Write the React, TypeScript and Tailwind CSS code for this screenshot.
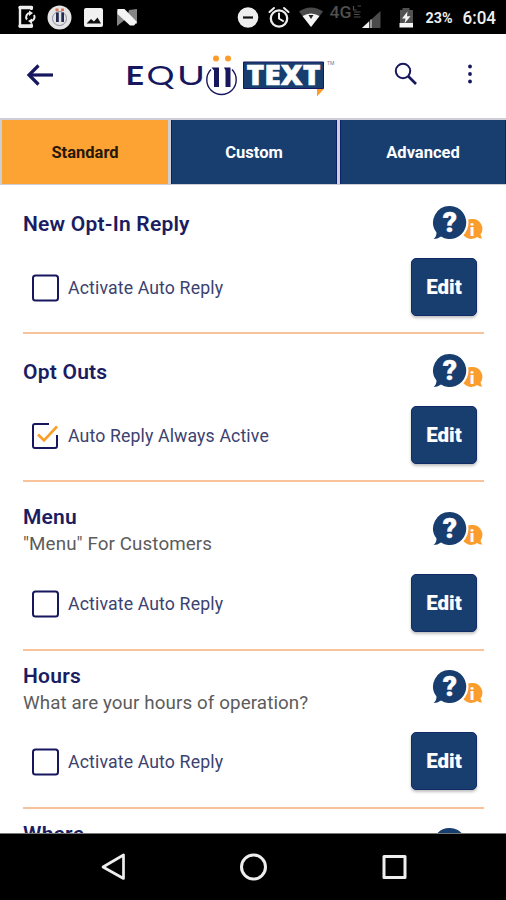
import React from "react";

const NAVY = "#183e70";
const INK = "#17175f";
const ORANGE = "#fb9d2c";

function StatusBar() {
  return (
    <div className="h-[34px] shrink-0 bg-black">
      <svg width="506" height="34" viewBox="0 0 506 34" fontFamily="Roboto, sans-serif">
        <g fill="none" stroke="#ededed">
          <path d="M31.5 10V7.5H20V26.5H31.5V23.5" strokeWidth="2.4" strokeLinejoin="round" />
          <path d="M20 26H31.5M20 7.5H31.5" strokeWidth="3.4" strokeLinecap="round" />
          <path d="M27 19.500a4 4 0 0 1 3-6.500M34 15a4 4 0 0 1-3 6" strokeWidth="2" />
        </g>
        <path d="M29 10.500l4 2.500-4 3zM32 18.500l-4 2.500 4 3z" fill="#ededed" />
        <circle cx="59.500" cy="17.500" r="12" fill="#e4e4e4" />
        <circle cx="59.500" cy="18.500" r="7" fill="none" stroke="#8c8da0" strokeWidth="1" />
        <path d="M56 12.500h2.800v9.500H56zM61.300 12.500H64v9.500h-2.700z" fill="#252b50" />
        <path d="M55.500 8.500h3v2.500h-3zM61 8.500h3v2.500h-3z" fill="#e2734b" />
        <rect x="84" y="8" width="19" height="19" rx="2" fill="#f1f1f1" />
        <path d="M86.500 23.500l4.500-4.500 3 2.500 3.500-4 3.500 6z" fill="#111" />
        <path d="M117 10l9 6v3l-9 7zM137 9v15l-10-6 2-8z" fill="#858585" />
        <path d="M117.500 9h7L137 22l-3 3.500h-4L117.500 14z" fill="#f4f4f4" />
        <circle cx="248" cy="17.500" r="10.300" fill="#eee" />
        <path d="M243 17.500h10" stroke="#111" strokeWidth="2.200" />
        <g fill="none" stroke="#eee" strokeWidth="2">
          <circle cx="279" cy="18.500" r="8.200" strokeWidth="2.300" />
          <path d="M279 13.500v5l4 2.500M269.500 12l4.500-4M288.500 12l-4.500-4" strokeLinecap="round" />
        </g>
        <path d="M299 11.500Q311 3.500 323 11.500L311 27z" fill="#4a4a4a" />
        <path d="M302.500 16Q311 11 319.500 16L311 27z" fill="#f5f5f5" />
        <path d="M308.500 15h5l-2.500 4z" fill="#222" />
        <text x="329.500" y="17.500" fontSize="16" fontWeight="500" fill="#4f4f4f" textLength="22" lengthAdjust="spacingAndGlyphs">4G</text>
        <path d="M353.500 6v4h3M357.500 6h3.500M354 12h6.500M354 14.500h5.500M354 17h6.500" stroke="#4f4f4f" strokeWidth="1.200" fill="none" />
        <path d="M362 28L380.500 11V28z" fill="#4b4b4b" />
        <path d="M362 28l7-6.500V28z" fill="#f2f2f2" />
        <path d="M371 19.500V28" stroke="#b8b8b8" strokeWidth="1.500" />
        <path d="M402.500 8h7v2h3.500v13h-13V10h2.500z" fill="#515151" />
        <path d="M399.500 23h13.500v4.500h-13.500z" fill="#f5f5f5" />
        <path d="M407.500 11.500l-5.500 7h3.500l-1 5 6-7.200H407z" fill="#f5f5f5" />
        <text x="425.500" y="23" fontSize="14" fontWeight="700" fill="#eee" textLength="27" lengthAdjust="spacingAndGlyphs">23%</text>
        <text x="462.500" y="24" fontSize="18" fontWeight="500" fill="#eee" textLength="33.500" lengthAdjust="spacingAndGlyphs">6:04</text>
      </svg>
    </div>
  );
}

function Logo() {
  return (
    <svg className="ml-[72px]" width="212" height="46" viewBox="126 53 212 46">
      <g fill={INK} fontFamily="Lato, sans-serif" fontSize="27.500">
        <text x="125.500" y="84.500" fontWeight="700" textLength="18.500" lengthAdjust="spacingAndGlyphs">E</text>
        <text x="146.500" y="84.500" textLength="28" lengthAdjust="spacingAndGlyphs">Q</text>
        <text x="177" y="84.500" textLength="28" lengthAdjust="spacingAndGlyphs">U</text>
      </g>
      <path d="M211 69.500A14.700 14.700 0 1 0 232 69.500" fill="none" stroke={INK} strokeWidth="1.400" />
      <path d="M211.500 67.500h7.500V87h-5V70.500zM224 67.500h6.500V87h-5V70.500z" fill={INK} />
      <circle cx="216" cy="58.500" r="3" fill={ORANGE} />
      <circle cx="228" cy="58.500" r="3" fill={ORANGE} />
      <path d="M243.500 62h80v26.500h-80z" fill={NAVY} stroke={INK} strokeWidth="1" />
      <text x="246.500" y="85" fontFamily="Open Sans, sans-serif" fontWeight="800" fontSize="28" fill="#fff" stroke="#fff" strokeWidth="0.500" textLength="74" lengthAdjust="spacingAndGlyphs">TEXT</text>
      <path d="M317 89h7l-7 7.500z" fill={ORANGE} />
      <text x="327" y="65" fontFamily="Roboto, sans-serif" fontSize="5" fill="#77778c">TM</text>
    </svg>
  );
}

function Header() {
  return (
    <header className="flex h-[84px] shrink-0 items-center bg-white">
      <svg className="ml-[26px] mt-[-2px] shrink-0" width="28" height="24" viewBox="0 0 28 24" fill="none" stroke={INK} strokeWidth="3.200">
        <path d="M27 12H3" />
        <path d="M12.500 2.500L3 12l9.500 9.500" />
      </svg>
      <Logo />
      <svg className="ml-[55px] mt-[-6px] shrink-0" width="25" height="25" viewBox="0 0 25 25" fill="none" stroke={INK}>
        <circle cx="10" cy="10" r="7.200" strokeWidth="2" />
        <path d="M15 15l8 8" strokeWidth="2.700" />
      </svg>
      <svg className="ml-[49px] mt-[-5px] shrink-0" width="6" height="22" viewBox="0 0 6 22" fill={INK}>
        <circle cx="3" cy="3.500" r="1.900" />
        <circle cx="3" cy="11" r="1.900" />
        <circle cx="3" cy="18.500" r="1.900" />
      </svg>
    </header>
  );
}

function Tabs() {
  return (
    <nav className="grid h-[67px] shrink-0 grid-cols-[166px_166px_166px] gap-[3px] bg-[#cdced6] pt-[2px] pr-[0px] pb-[1px] pl-[2px] text-[16.500px] font-bold text-white">
      <button className="bg-[#fda333] pt-[2px] text-[#27180a]">Standard</button>
      <button className="border-x border-[#0b2167] bg-[#183e70] pt-[2px]">Custom</button>
      <button className="border-x border-[#0b2167] bg-[#183e70] pt-[2px]">Advanced</button>
    </nav>
  );
}

function HelpIcon() {
  return (
    <svg width="51" height="36" viewBox="0 0 51 36" fontFamily="Roboto, sans-serif" fontWeight="900" fill="#fff" textAnchor="middle">
      <path d="M40.500 14a9.800 9.800 0 0 1 8 15.500q.5 2.800 2 4-3.500 0-5.500-1.500a10 10 0 1 1-4.500-18z" fill={ORANGE} />
      <circle cx="18" cy="17.500" r="18.500" />
      <path d="M18 1a16.500 16.500 0 1 1-9 30.500Q5.500 34 1.500 34q3-2.500 3-6.500A16.500 16.500 0 0 1 18 1z" fill={NAVY} />
      <text x="18" y="27" fontSize="28" stroke="#fff" strokeWidth="0.400">?</text>
      <text x="40" y="30.500" fontSize="17">i</text>
    </svg>
  );
}

function Checkbox({ checked }: { checked?: boolean }) {
  return (
    <svg width="30" height="28" viewBox="0 0 30 28" fill="none" stroke={INK} strokeWidth="2">
      {checked ? (
        <>
          <path d="M18 2H4Q2 2 2 4V24Q2 26 4 26H24Q26 26 26 24V13" />
          <path d="M7 12.500l6 6L26 4.500" stroke={ORANGE} strokeWidth="2.600" />
        </>
      ) : (
        <rect x="2" y="1.500" width="25" height="25" rx="2.500" />
      )}
    </svg>
  );
}

type SectionProps = {
  title: string;
  subtitle?: string;
  label?: string;
  checked?: boolean;
  size: string;
  titlePad: string;
  iconPad: string;
  rowPad?: string;
};

function Section({ title, subtitle, label, checked, size, titlePad, iconPad, rowPad = "mb-[16px]" }: SectionProps) {
  return (
    <section className={`mx-[23px] flex w-[461px] shrink-0 flex-col justify-between border-b-2 border-[#f8c29a] ${size}`}>
      <div className="flex items-start justify-between">
        <div className={titlePad}>
          <h2 className="text-[21px] leading-[26px] font-semibold tracking-[0.220px] text-[#1b1d62]">{title}</h2>
          {subtitle && <p className="text-[18.800px] leading-[28px] tracking-[0.100px] text-[#5c5c5c]">{subtitle}</p>}
        </div>
        <div className={`mr-[1px] ${iconPad}`}>
          <HelpIcon />
        </div>
      </div>
      {label && (
        <div className={`flex h-[58px] shrink-0 items-center ${rowPad}`}>
          <label className="ml-[8px] flex items-center gap-[7px] pt-[2px] text-[17.700px] tracking-[0.130px] text-[#3b4270]">
            <Checkbox checked={checked} />
            {label}
          </label>
          <button className="mr-[7px] ml-auto h-[58px] w-[66px] rounded-[5px] border border-[#122b68] bg-[#183e70] text-[20.500px] font-black text-white shadow-[0_2px_3px_rgba(0,0,0,0.25)]">
            Edit
          </button>
        </div>
      )}
    </section>
  );
}

function NavBar() {
  return (
    <footer className="h-[67px] shrink-0 border-t border-[#777] bg-black">
      <svg width="506" height="66" viewBox="0 834 506 66" fill="none" stroke="#eee" strokeWidth="3" strokeLinejoin="round">
        <path d="M103 867L123.500 855V878.500z" strokeWidth="2.700" />
        <circle cx="253.500" cy="867" r="12" />
        <rect x="384" y="856.500" width="21" height="21" />
      </svg>
    </footer>
  );
}

export default function App() {
  return (
    <div className="flex h-[900px] w-[506px] flex-col overflow-hidden bg-white font-[Roboto,sans-serif]">
      <StatusBar />
      <Header />
      <Tabs />
      <main className="flex min-h-0 flex-1 flex-col overflow-hidden">
        <Section title="New Opt-In Reply" label="Activate Auto Reply" size="h-[149px]" titlePad="pt-[26px]" iconPad="pt-[20px]" />
        <Section title="Opt Outs" label="Auto Reply Always Active" checked size="h-[148px]" titlePad="pt-[25px]" iconPad="pt-[19px]" />
        <Section title="Menu" subtitle={'"Menu" For Customers'} label="Activate Auto Reply" size="h-[169px]" titlePad="pt-[22px]" iconPad="pt-[29px]" rowPad="mb-[17px]" />
        <Section title="Hours" subtitle="What are your hours of operation?" label="Activate Auto Reply" size="h-[158px]" titlePad="pt-[12px]" iconPad="pt-[18px]" rowPad="mb-[17px]" />
        <Section title="Where" size="h-[158px]" titlePad="pt-[12px]" iconPad="pt-[18px]" />
      </main>
      <NavBar />
    </div>
  );
}
